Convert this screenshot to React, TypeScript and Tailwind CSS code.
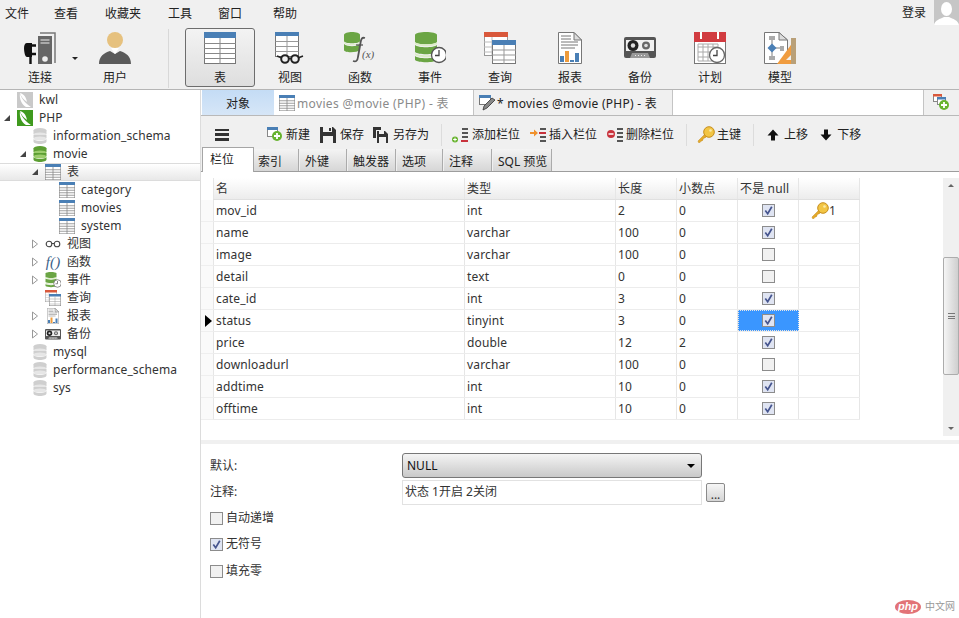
import React from "react";

const latin = "font-['Noto_Sans','Noto_Sans_CJK_SC',sans-serif]";

function GridIcon({ size = 16, head = "#4a7fb5" }: { size?: number; head?: string }) {
  const c = size / 4;
  return (
    <svg width={size} height={size} viewBox="0 0 32 32" className="shrink-0">
      <rect x="0.5" y="0.5" width="31" height="31" fill="#fff" stroke="#777" />
      <rect x="0" y="0" width="32" height="6" fill={head} />
      <path d="M0 11.5H32M0 16.5H32M0 21.5H32M0 26.5H32M16 6V32" stroke="#888" strokeWidth={c > 6 ? 1 : 1.6} fill="none" />
    </svg>
  );
}

function DbIcon({ gray, w = 14, h = 16 }: { gray?: boolean; w?: number; h?: number }) {
  const a = gray ? "#cfcfcf" : "#5c9e32";
  const b = gray ? "#e6e6e6" : "#9ccc6c";
  return (
    <svg width={w} height={h} viewBox="0 0 14 16" className="shrink-0">
      <ellipse cx="7" cy="2.5" rx="6.5" ry="2.5" fill={a} />
      <rect x="0.5" y="2.5" width="13" height="3.5" fill={a} />
      <ellipse cx="7" cy="6.5" rx="6.5" ry="2" fill={b} />
      <rect x="0.5" y="7" width="13" height="3" fill={a} />
      <ellipse cx="7" cy="10.5" rx="6.5" ry="2" fill={b} />
      <path d="M.5 11v2.5C.5 15 3.5 16 7 16s6.500-1 6.500-2.500V11C12 12.500 10 13 7 13s-5-.5-6.500-2z" fill={a} />
    </svg>
  );
}

function ClockDb({ size = 32 }: { size?: number }) {
  return (
    <svg width={size} height={size} viewBox="0 0 32 32" className="shrink-0">
      <path d="M1 3c0-4 22-4 22 0v7c0 3-22 3-22 0z" fill="#6ba544" />
      <path d="M1 10c3 3 19 3 22 0v2c-3 3-19 3-22 0z" fill="#dcecc8" />
      <path d="M1 13c3 3 19 3 22 0v7c-3 3-19 3-22 0z" fill="#6ba544" />
      <path d="M1 21c3 3 19 3 22 0v2c-3 3-19 3-22 0z" fill="#dcecc8" />
      <path d="M1 24c3 3 19 3 22 0v4c-3 3-19 3-22 0z" fill="#6ba544" />
      <circle cx="25" cy="23" r="7.500" fill="#fff" stroke="#555" strokeWidth="1.300" />
      <path d="M25 18v5.500h-4" stroke="#444" strokeWidth="1.300" fill="none" />
    </svg>
  );
}

function LeafIcon({ on }: { on?: boolean }) {
  return (
    <svg width="16" height="16" viewBox="0 0 16 16" className="shrink-0">
      <rect width="16" height="16" fill={on ? "#3f9a1e" : "#c9c9c9"} />
      <path d="M3 1c1 5 4 9 11 14H9C5 13 2 7 3 1z" fill="#fff" />
      <path d="M3 1c4 1 6 4 7 9-3-2-6-5-7-9z" fill="#fff" />
    </svg>
  );
}

function Glasses({ w = 32, h = 32 }: { w?: number; h?: number }) {
  return (
    <svg width={w} height={h} viewBox="0 0 32 32" className="shrink-0">
      <rect x="1.500" y="0.500" width="23" height="24" fill="#fff" stroke="#777" />
      <rect x="1" y="0" width="24" height="4" fill="#4a7fb5" />
      <path d="M1.500 9.500H24.500M1.500 14.500H24.500M1.500 19.500H24.500M13 4V24" stroke="#999" fill="none" />
      <circle cx="11" cy="27" r="3.800" fill="#f0f0f0" stroke="#222" strokeWidth="2" />
      <circle cx="21" cy="27" r="3.800" fill="#f0f0f0" stroke="#222" strokeWidth="2" />
      <path d="M3 24l5 2M29 24l-5 2M15 26.500h2" stroke="#222" strokeWidth="1.500" fill="none" />
    </svg>
  );
}

function FuncIcon() {
  return (
    <svg width="32" height="32" viewBox="0 0 32 32" className="shrink-0">
      <path d="M0 3c0-4 16-4 16 0v6c0 3-16 3-16 0z" fill="#6ba544" />
      <path d="M0 10c3 3 13 3 16 0v1c-3 3-13 3-16 0z" fill="#dcecc8" />
      <path d="M0 12c3 3 13 3 16 0v6c-3 3-16 3-16 0z" fill="#6ba544" />
      <path d="M21 6c-3-1-4 1-4.500 5l-2.500 14c-.5 4-2 5-5 4" fill="none" stroke="#555" strokeWidth="1.800" />
      <path d="M12 13h7" stroke="#555" strokeWidth="1.300" />
      <text x="18" y="26" fontSize="11" fontStyle="italic" fontFamily="Liberation Serif" fill="#555">(x)</text>
    </svg>
  );
}

function QueryIcon({ size = 32 }: { size?: number }) {
  return (
    <svg width={size} height={size} viewBox="0 0 32 32" className="shrink-0">
      <rect x="0.500" y="0.500" width="23" height="23" fill="#fff" stroke="#999" />
      <rect width="24" height="5" fill="#d9583b" />
      <path d="M0 10H8M0 15H8M0 20H8M8 5v18" stroke="#bbb" fill="none" />
      <rect x="8.500" y="8.500" width="23" height="23" fill="#fff" stroke="#777" />
      <rect x="8" y="8" width="24" height="5" fill="#4a7fb5" />
      <path d="M8 18H32M8 23H32M8 28H32M20 13V32" stroke="#999" fill="none" />
    </svg>
  );
}

function ReportIcon({ w = 24, h = 32 }: { w?: number; h?: number }) {
  return (
    <svg width={w} height={h} viewBox="0 0 24 32" className="shrink-0">
      <path d="M.5.500H16L23.500 8V31.500H.5z" fill="#fff" stroke="#777" />
      <path d="M16 .5V8H23.500z" fill="#ddd" stroke="#777" />
      <path d="M3 4h10M3 7h10M3 10h17M3 13h17M3 16h14" stroke="#777" fill="none" />
      <rect x="2" y="24" width="4" height="6" fill="#4a7fb5" />
      <rect x="7" y="19" width="4" height="11" fill="#ee9b3b" />
      <rect x="12" y="28" width="4" height="2" fill="#4a7fb5" />
      <rect x="17" y="21" width="4" height="9" fill="#4a7fb5" />
    </svg>
  );
}

function TapeIcon({ w = 32, h = 22 }: { w?: number; h?: number }) {
  return (
    <svg width={w} height={h} viewBox="0 0 32 22" className="shrink-0">
      <rect width="32" height="21" rx="2" fill="#555" />
      <rect x="2" y="3" width="28" height="11" fill="#f0f0f0" />
      <circle cx="9" cy="8.500" r="5.500" fill="#222" />
      <circle cx="9" cy="8.500" r="2.200" fill="#ddd" />
      <circle cx="22" cy="8.500" r="4" fill="#666" />
      <circle cx="22" cy="8.500" r="1.800" fill="#ddd" />
      <path d="M6 21l2-5h16l2 5z" fill="#999" />
      <path d="M11 18.500h10" stroke="#eee" strokeDasharray="1 2" />
    </svg>
  );
}

function CalendarIcon() {
  return (
    <svg width="32" height="32" viewBox="0 0 32 32" className="shrink-0">
      <rect x="0.500" y="0.500" width="31" height="31" fill="#fff" stroke="#777" />
      <rect width="32" height="10" fill="#d13b40" />
      <path d="M7 0v7M24 0v7" stroke="#fff" strokeWidth="2" />
      <path d="M4 15h20M4 20h20M4 25h20M9 12v17M14 12v17M19 12v17M4 12h20v17H4z" stroke="#aaa" fill="none" />
      <circle cx="23" cy="23" r="7.500" fill="#fff" stroke="#666" strokeWidth="1.300" />
      <path d="M23 18v5.500h-4" stroke="#444" strokeWidth="1.300" fill="none" />
    </svg>
  );
}

function ModelIcon() {
  return (
    <svg width="32" height="32" viewBox="0 0 32 32" className="shrink-0">
      <path d="M.5.500H15L23.500 8V31.500H.5z" fill="#fff" stroke="#777" />
      <path d="M15 .5V8H23.500z" fill="#ddd" stroke="#777" />
      <path d="M8 8v16M8 16h12" stroke="#aaa" strokeWidth="1.500" />
      <rect x="5" y="4" width="6" height="4" fill="#aaa" />
      <rect x="5" y="24" width="6" height="4" fill="#aaa" />
      <rect x="16" y="14" width="4" height="5" fill="#aaa" />
      <path d="M8 11.500l4.500 4.500L8 20.500 3.500 16z" fill="#4a7fb5" />
      <path d="M32 6v26H13z" fill="#f09c3f" />
      <path d="M27 23v5h-5z" fill="#f0f0f0" />
      <path d="M27 6h5v26h-5z" fill="#b9a078" />
    </svg>
  );
}

function PlugIcon() {
  return (
    <svg width="32" height="32" viewBox="0 0 32 32" className="shrink-0">
      <path d="M16 1h15v30" fill="none" stroke="#777" strokeWidth="1.500" />
      <rect x="14" y="4" width="14" height="28" fill="#666" />
      <path d="M16.500 8h9M16.500 11h9" stroke="#eee" strokeWidth="1" />
      <circle cx="21" cy="27" r="2.800" fill="#eee" />
      <path d="M0 16c0-3 1-5 3-5h5v14H3c-2 0-3-5-3-9z" fill="#111" />
      <path d="M8 13.500h4M8 22h4M6.500 25v7" stroke="#111" strokeWidth="2.400" />
    </svg>
  );
}

function UserIcon() {
  return (
    <svg width="32" height="32" viewBox="0 0 32 32" className="shrink-0">
      <circle cx="16" cy="8" r="8" fill="#e6c17e" />
      <path d="M0 32c0-8 5-11 11-13l5 3 5-3c6 2 11 5 11 13z" fill="#5a5a5a" />
      <path d="M12 16h8l-4 6z" fill="#fff" />
    </svg>
  );
}

function KeyIcon({ size = 18 }: { size?: number }) {
  return (
    <svg width={size} height={size} viewBox="0 0 18 18" className="shrink-0">
      <path d="M1 15l7-7 2 2-2 2-1 0-1 1v1l-1 1h-1l-1 1.500H1.500z" fill="#e3a92a" stroke="#c68d1c" strokeWidth=".5" />
      <circle cx="12" cy="6" r="5.300" fill="#f2c544" stroke="#c68d1c" />
      <circle cx="13.500" cy="4.500" r="1.300" fill="#fbeaa8" />
    </svg>
  );
}

function PlusBadge({ x = 8, y = 8 }: { x?: number; y?: number }) {
  return (
    <g>
      <circle cx={x + 3} cy={y + 3} r="5" fill="#67b32e" />
      <path d={`M${x} ${y + 3}h6M${x + 3} ${y}v6`} stroke="#fff" strokeWidth="1.800" />
    </g>
  );
}

function NewIcon() {
  return (
    <svg width="17" height="16" viewBox="0 0 17 16" className="shrink-0">
      <rect x="0.500" y="0.500" width="10" height="9" fill="#fff" stroke="#888" />
      <rect width="11" height="3" fill="#4a7fb5" />
      <PlusBadge x={7} y={6} />
    </svg>
  );
}

function SaveIcon() {
  return (
    <svg width="16" height="16" viewBox="0 0 16 16" className="shrink-0">
      <path d="M0 0h13l3 3v13H0z" fill="#333" />
      <rect x="3" y="0" width="9" height="5" fill="#f0f0f0" />
      <rect x="3" y="9" width="10" height="7" fill="#f0f0f0" />
      <rect x="9" y="1" width="2" height="3" fill="#333" />
    </svg>
  );
}

function SaveAsIcon() {
  return (
    <svg width="16" height="16" viewBox="0 0 16 16" className="shrink-0">
      <path d="M0 0h8v3H3v8H0z" fill="#333" />
      <path d="M4 4h8l3 3v9H4z" fill="#333" />
      <rect x="6" y="4" width="5" height="3" fill="#f0f0f0" />
      <rect x="6" y="10" width="7" height="6" fill="#f0f0f0" />
    </svg>
  );
}

function ColumnIcon({ kind }: { kind: "add" | "ins" | "del" }) {
  return (
    <svg width="18" height="16" viewBox="0 0 18 16" className="shrink-0">
      <path d="M11 1h6v2h-6zM11 5h6v2h-6zM11 13h6v2h-6z" fill="#555" />
      <rect x="11" y="9" width="6" height="2" fill="#555" />
      {kind === "add" && (
        <>
          <rect x="10" y="13" width="7" height="2" fill="#c8323c" />
          <circle cx="4" cy="12.500" r="3" fill="#67b32e" />
          <path d="M2.200 12.500h3.600M4 10.700v3.600" stroke="#fff" />
        </>
      )}
      {kind === "ins" && (
        <>
          <rect x="10" y="5" width="7" height="2" fill="#c8323c" />
          <path d="M1 5h4V2.500L9 6l-4 3.500V7H1z" fill="#f0912d" />
        </>
      )}
      {kind === "del" && (
        <>
          <circle cx="5" cy="7" r="4" fill="#c8323c" />
          <path d="M2.500 7h5" stroke="#fff" strokeWidth="1.500" />
        </>
      )}
    </svg>
  );
}

function Arrow({ up }: { up?: boolean }) {
  return (
    <svg width="12" height="12" viewBox="0 0 12 12" className="shrink-0">
      <path d={up ? "M6 .5L11.500 6.500H8V11.500H4V6.500H.5z" : "M6 11.500L11.500 5.500H8V.5H4V5.500H.5z"} fill="#111" />
    </svg>
  );
}

function Check({ on, size = 13 }: { on?: boolean; size?: number }) {
  return (
    <svg width={size} height={size} viewBox="0 0 13 13" className="shrink-0">
      <rect x="0.500" y="0.500" width="12" height="12" fill={on ? "#dfe4f2" : "#f1f1f1"} stroke="#8c8c8c" />
      {on && <path d="M3.300 6.500l2.400 3.300L9.800 2.800" fill="none" stroke="#46558f" strokeWidth="1.700" />}
    </svg>
  );
}

const tools2 = [
  { label: "视图", icon: <Glasses /> },
  { label: "函数", icon: <FuncIcon /> },
  { label: "事件", icon: <ClockDb /> },
  { label: "查询", icon: <QueryIcon /> },
  { label: "报表", icon: <ReportIcon /> },
  { label: "备份", icon: <TapeIcon /> },
  { label: "计划", icon: <CalendarIcon /> },
  { label: "模型", icon: <ModelIcon /> },
];

const menus = [
  { t: "文件", c: "w-[49px]" },
  { t: "查看", c: "w-[51px]" },
  { t: "收藏夹", c: "w-[63px]" },
  { t: "工具", c: "w-[50px]" },
  { t: "窗口", c: "w-[55px]" },
  { t: "帮助", c: "w-[40px]" },
];

function TopBars() {
  return (
    <div className="h-[90px] shrink-0 bg-[#f0f0f0] border-b border-[#b5b5b5]">
      <div className="h-[28px] flex items-start pl-[5px] pt-[6px] text-[12px] leading-[16px] text-[#222]">
        {menus.map((m) => (
          <span key={m.t} className={m.c}>{m.t}</span>
        ))}
        <span className="ml-auto mr-[8px] mt-[-1px]">登录</span>
        <div className="w-[25px] h-[25px] mt-[-6px] bg-[#c6c6c6] overflow-hidden flex justify-center">
          <svg width="25" height="25" viewBox="0 0 25 25">
            <ellipse cx="12.500" cy="9" rx="5.500" ry="7" fill="#fff" />
            <path d="M0 25c1-5 6-6 10-8h5c4 2 9 3 10 8z" fill="#fff" />
          </svg>
        </div>
      </div>
      <div className="h-[61px] flex items-stretch pl-[5px] text-[12px] text-[#222]">
        <div className="w-[70px] relative flex flex-col items-center pt-[4px]">
          <div className="h-[32px] flex items-center"><PlugIcon /></div>
          <span className="mt-[6px] leading-[16px]">连接</span>
          <span className="absolute right-[-3px] top-[29px] border-x-[3px] border-t-[3px] border-x-transparent border-t-[#222]" />
        </div>
        <div className="w-[70px] ml-[5px] flex flex-col items-center pt-[4px]">
          <div className="h-[32px] flex items-center"><UserIcon /></div>
          <span className="mt-[6px] leading-[16px]">用户</span>
        </div>
        <div className="w-px bg-[#d8d8d8] my-[1px] ml-[18px] mr-[16px]" />
        <div className="w-[70px] h-[59px] flex flex-col items-center pt-[3px] rounded-[3px] border border-[#6d6d6d] bg-gradient-to-b from-[#f3f3f3] to-[#dedede]">
          <GridIcon size={32} />
          <span className="mt-[6px] leading-[16px]">表</span>
        </div>
        {tools2.map((t) => (
          <div key={t.label} className="w-[70px] flex flex-col items-center pt-[4px]">
            <div className="h-[32px] flex items-center">{t.icon}</div>
            <span className="mt-[6px] leading-[16px]">{t.label}</span>
          </div>
        ))}
      </div>
    </div>
  );
}

function Tri({ open }: { open?: boolean }) {
  return open ? (
    <svg width="8" height="8" viewBox="0 0 8 8"><path d="M7 1v6H1z" fill="#444" /></svg>
  ) : (
    <svg width="8" height="10" viewBox="0 0 8 10"><path d="M1.500 1l5 4-5 4z" fill="#fff" stroke="#999" /></svg>
  );
}

type Node = { t: string; icon: React.ReactNode; arrow?: "open" | "closed"; pad: string; sel?: boolean };

const tree: Node[] = [
  { t: "kwl", icon: <LeafIcon />, pad: "pl-[17px]" },
  { t: "PHP", icon: <LeafIcon on />, arrow: "open", pad: "pl-[3px]" },
  { t: "information_schema", icon: <DbIcon gray />, pad: "pl-[33px]" },
  { t: "movie", icon: <DbIcon />, arrow: "open", pad: "pl-[19px]" },
  { t: "表", icon: <GridIcon />, arrow: "open", pad: "pl-[31px]", sel: true },
  { t: "category", icon: <GridIcon />, pad: "pl-[59px]" },
  { t: "movies", icon: <GridIcon />, pad: "pl-[59px]" },
  { t: "system", icon: <GridIcon />, pad: "pl-[59px]" },
  { t: "视图", icon: <svg width="16" height="8" viewBox="0 0 16 8" className="shrink-0"><circle cx="4" cy="4" r="2.800" fill="none" stroke="#444" strokeWidth="1.100" /><circle cx="12" cy="4" r="2.800" fill="none" stroke="#444" strokeWidth="1.100" /><path d="M7 3.500h2" stroke="#444" /></svg>, arrow: "closed", pad: "pl-[31px]" },
  { t: "函数", icon: <span className="w-[16px] text-center font-['Liberation_Serif'] italic text-[15px] leading-[16px] text-[#3b5f88]">f()</span>, arrow: "closed", pad: "pl-[31px]" },
  { t: "事件", icon: <ClockDb size={16} />, arrow: "closed", pad: "pl-[31px]" },
  { t: "查询", icon: <QueryIcon size={16} />, pad: "pl-[45px]" },
  { t: "报表", icon: <div className="w-[16px] flex justify-center"><ReportIcon w={12} h={16} /></div>, arrow: "closed", pad: "pl-[31px]" },
  { t: "备份", icon: <TapeIcon w={16} h={13} />, arrow: "closed", pad: "pl-[31px]" },
  { t: "mysql", icon: <DbIcon gray />, pad: "pl-[33px]" },
  { t: "performance_schema", icon: <DbIcon gray />, pad: "pl-[33px]" },
  { t: "sys", icon: <DbIcon gray />, pad: "pl-[33px]" },
];

function Sidebar() {
  return (
    <div className="w-[201px] shrink-0 bg-white border-r border-[#dcdcdc] text-[12px] tracking-[0.1px] text-[#333] pt-[1px]">
      {tree.map((n) => (
        <div
          key={n.t}
          className={`h-[18px] flex items-center ${n.pad} ${n.sel ? "bg-gradient-to-b from-white to-[#e8e8e8] border-y border-[#dcdcdc]" : ""}`}
        >
          {n.arrow && (
            <span className="w-[14px] flex items-center justify-start shrink-0">
              <Tri open={n.arrow === "open"} />
            </span>
          )}
          {n.icon}
          <span className="ml-[6px] leading-[18px]">{n.t}</span>
        </div>
      ))}
    </div>
  );
}

function TabBar() {
  return (
    <div className="h-[26px] shrink-0 flex bg-white border-b border-[#b9b9b9] text-[12px]">
      <div className="w-[72px] ml-px bg-gradient-to-b from-[#c4dcf5] to-[#d6e6f7] flex items-center justify-center pt-[2px] text-[#222]">对象</div>
      <div className="w-[199px] flex items-center pl-[5px] gap-[2px] text-[#8a8a8a] tracking-[0.35px]">
        <GridIcon />
        <span className="pt-[2px]">movies @movie (PHP) - 表</span>
      </div>
      <div className="w-[200px] bg-[#f0f0f0] border-x border-[#c4c4c4] flex items-center pl-[5px] gap-[1px] text-[#222] tracking-[0.25px]">
        <svg width="17" height="16" viewBox="0 0 17 16" className="shrink-0">
          <rect x="0.500" y="0.500" width="11" height="9" fill="#fff" stroke="#777" />
          <rect width="12" height="3" fill="#4a7fb5" />
          <path d="M4 15l1-4L13 3l3 2-8 8z" fill="#888" stroke="#333" strokeWidth=".8" />
        </svg>
        <span className="pt-[2px]">* movies @movie (PHP) - 表</span>
      </div>
      <div className="flex-1" />
      <div className="w-[36px] bg-[#f0f0f0] border-l border-[#c4c4c4] flex items-center justify-center">
        <svg width="17" height="17" viewBox="0 0 17 17">
          <rect x="0.500" y="0.500" width="8" height="7" fill="#fff" stroke="#888" />
          <rect width="9" height="2.500" fill="#d9583b" />
          <rect x="4.500" y="3.500" width="8" height="7" fill="#fff" stroke="#888" />
          <rect x="4" y="3" width="9" height="2.500" fill="#4a7fb5" />
          <PlusBadge x={8} y={8} />
        </svg>
      </div>
    </div>
  );
}

function ActionBar() {
  return (
    <div className="h-[34px] shrink-0 flex items-center text-[12px] text-[#222] pl-[14px] pt-[3px]">
      <div className="w-[14px] h-[12px] flex flex-col justify-between mr-[38px]">
        <span className="h-[2.500px] bg-[#333]" />
        <span className="h-[2.500px] bg-[#333]" />
        <span className="h-[2.500px] bg-[#333]" />
      </div>
      <NewIcon />
      <span className="ml-[2px] mr-[10px]">新建</span>
      <SaveIcon />
      <span className="ml-[4px] mr-[9px]">保存</span>
      <SaveAsIcon />
      <span className="ml-[4px]">另存为</span>
      <span className="w-px h-[22px] bg-[#dcdcdc] ml-[12px] mr-[9px]" />
      <ColumnIcon kind="add" />
      <span className="ml-[3px] mr-[9px]">添加栏位</span>
      <ColumnIcon kind="ins" />
      <span className="ml-[2px] mr-[9px]">插入栏位</span>
      <ColumnIcon kind="del" />
      <span className="ml-[2px]">删除栏位</span>
      <span className="w-px h-[22px] bg-[#dcdcdc] ml-[12px] mr-[10px]" />
      <KeyIcon />
      <span className="ml-[2px]">主键</span>
      <span className="w-px h-[22px] bg-[#dcdcdc] ml-[12px] mr-[13px]" />
      <Arrow up />
      <span className="ml-[5px] mr-[12px]">上移</span>
      <Arrow />
      <span className="ml-[5px]">下移</span>
    </div>
  );
}

const subTabs = [
  { t: "索引", c: "w-[46px]" },
  { t: "外键", c: "w-[47px]" },
  { t: "触发器", c: "w-[48px]" },
  { t: "选项", c: "w-[46px]" },
  { t: "注释", c: "w-[48px]" },
  { t: "SQL 预览", c: "w-[59px]" },
];

function SubTabs() {
  return (
    <div className="h-[22px] shrink-0 flex items-end border-b border-[#9d9d9d] text-[12px] text-[#222] relative">
      <div className="absolute left-px bottom-[-1px] w-[52px] h-[25px] bg-white border border-b-0 border-[#a5a5a5] flex items-center pl-[7px]">栏位</div>
      <div className="w-[52px] shrink-0" />
      {subTabs.map((s) => (
        <div key={s.t} className={`${s.c} h-[22px] mr-px shrink-0 border-r border-[#ababab] bg-gradient-to-b from-[#f4f4f4] to-[#d6d6d6] flex items-center pl-[5px] pt-[3px]`}>
          {s.t}
        </div>
      ))}
    </div>
  );
}

const rows = [
  { n: "mov_id", t: "int", l: "2", d: "0", nn: true, key: true },
  { n: "name", t: "varchar", l: "100", d: "0", nn: true },
  { n: "image", t: "varchar", l: "100", d: "0" },
  { n: "detail", t: "text", l: "0", d: "0" },
  { n: "cate_id", t: "int", l: "3", d: "0", nn: true },
  { n: "status", t: "tinyint", l: "3", d: "0", nn: true, cur: true },
  { n: "price", t: "double", l: "12", d: "2", nn: true },
  { n: "downloadurl", t: "varchar", l: "100", d: "0" },
  { n: "addtime", t: "int", l: "10", d: "0", nn: true },
  { n: "offtime", t: "int", l: "10", d: "0", nn: true },
];

const cols = "grid grid-cols-[252px_151px_61px_61px_61px_61px]";

function FieldTable() {
  const cell = "border-r border-[#e6e6e6] pl-[2px] flex items-center";
  return (
    <div className="h-[268px] shrink-0 flex bg-white text-[12px] tracking-[0.15px] text-[#333]">
      <div className="w-[12px] shrink-0 mt-[6px] flex flex-col">
        <div className="h-[22px]" />
        {rows.map((r) => (
          <div key={r.n} className="h-[22px] flex items-center justify-end bg-[#fafafa] border-b border-[#efefef]">
            {r.cur && <span className="border-y-[6px] border-l-[7px] border-y-transparent border-l-black mr-[1px]" />}
          </div>
        ))}
      </div>
      <div className="w-[647px] shrink-0 mt-[6px]">
        <div className={`${cols} h-[22px] bg-gradient-to-b from-white to-[#ececec] border-b border-[#e0e0e0]`}>
          {["名", "类型", "长度", "小数点", "不是 null", ""].map((h, i) => (
            <div key={i} className={`${cell} ${i === 0 ? "border-l" : ""}`}>{h}</div>
          ))}
        </div>
        {rows.map((r) => (
          <div key={r.n} className={`${cols} h-[22px] border-b border-[#ececec]`}>
            <div className={`${cell} border-l`}>{r.n}</div>
            <div className={cell}>{r.t}</div>
            <div className={cell}>{r.l}</div>
            <div className={cell}>{r.d}</div>
            <div
              className={`border-r border-[#e6e6e6] flex items-center justify-center ${r.cur ? "bg-[#3a96ff] border border-dotted border-[#0a2a55]" : ""}`}
            >
              <Check on={r.nn} />
            </div>
            <div className={`${cell} pl-[12px]`}>
              {r.key && (
                <>
                  <KeyIcon />
                  <span>1</span>
                </>
              )}
            </div>
          </div>
        ))}
      </div>
      <div className="flex-1" />
      <div className="w-[16px] shrink-0 mt-[6px] mb-[4px] bg-[#f0f0f0] flex flex-col items-center relative">
        <span className="mt-[6px] border-x-[3px] border-b-[3px] border-x-transparent border-b-[#666]" />
        <div className="absolute top-[79px] h-[118px] w-full bg-gradient-to-r from-[#f5f5f5] to-[#cfcfcf] border border-[#acacac] rounded-[2px] flex items-center justify-center">
          <div className="w-[7px] h-[6px] border-y border-[#777] flex items-center"><span className="w-full h-px bg-[#777]" /></div>
        </div>
        <span className="mt-auto mb-[6px] border-x-[3px] border-t-[3px] border-x-transparent border-t-[#666]" />
      </div>
    </div>
  );
}

function Form() {
  return (
    <div className="flex-1 bg-white border-t-[4px] border-[#f0f0f0] relative text-[12px] text-[#333] pl-[9px]">
      <div className="h-[35px] flex items-center pt-[8px]">
        <span className="w-[192px]">默认:</span>
        <div className="w-[300px] h-[25px] rounded-[3px] border border-[#777] bg-gradient-to-b from-[#f4f4f4] to-[#c9c9c9] flex items-center justify-between pl-[4px] pr-[6px] text-[#111]">
          <span>NULL</span>
          <span className="border-x-[4px] border-t-[4px] border-x-transparent border-t-black" />
        </div>
      </div>
      <div className="h-[26px] flex items-center">
        <span className="w-[192px]">注释:</span>
        <div className="w-[300px] h-[25px] border border-[#e2e2e2] flex items-center pl-[2px]">状态 1开启 2关闭</div>
        <div className="ml-[4px] w-[19px] h-[19px] rounded-[2px] border border-[#8a8a8a] bg-gradient-to-b from-[#f6f6f6] to-[#d5d5d5] flex items-end justify-center leading-[13px]">...</div>
      </div>
      {[
        { t: "自动递增", on: false, c: "mt-[3px]" },
        { t: "无符号", on: true, c: "mt-[6px]" },
        { t: "填充零", on: false, c: "mt-[7px]" },
      ].map((c) => (
        <div key={c.t} className={`h-[20px] flex items-center gap-[3px] ${c.c}`}>
          <Check on={c.on} />
          <span>{c.t}</span>
        </div>
      ))}
      <div className="absolute right-[4px] bottom-[4px] flex items-center gap-[4px]">
        <span className="w-[26px] h-[14px] rounded-[50%] bg-[#e27377] text-white text-[11px] italic font-bold leading-[13px] text-center font-['Liberation_Sans']">php</span>
        <span className="text-[10px] text-[#999]">中文网</span>
      </div>
    </div>
  );
}

export default function App() {
  return (
    <div className={`w-[959px] h-[618px] overflow-hidden flex flex-col bg-[#f0f0f0] ${latin}`}>
      <TopBars />
      <div className="flex-1 flex min-h-0">
        <Sidebar />
        <div className="flex-1 flex flex-col min-w-0">
          <TabBar />
          <ActionBar />
          <SubTabs />
          <FieldTable />
          <Form />
        </div>
      </div>
    </div>
  );
}
